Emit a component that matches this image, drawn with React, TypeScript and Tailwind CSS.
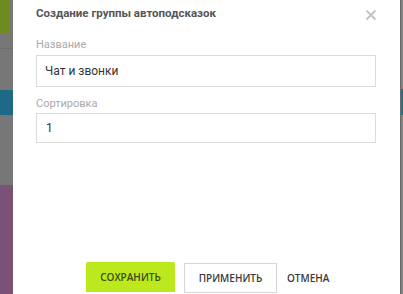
export default function App() {
  return (
    <div className="flex h-[294px] w-[403px] overflow-hidden bg-white">
      {/* backdrop strip, left */}
      <div className="flex w-[13px] shrink-0 flex-col bg-[#777777]">
        <div className="flex h-[34px] pr-[3px]">
          <div className="h-full w-full bg-[#6f8a1f]" />
        </div>
        <div className="h-[14px]" />
        <div className="h-px bg-[#6e6e6e]" />
        <div className="h-[41px]" />
        <div className="h-[25px] bg-[#1e6986]" />
        <div className="h-[70px]" />
        <div className="flex-1 bg-[#7a5276]" />
      </div>

      {/* modal */}
      <div className="flex w-[387px] shrink-0 flex-col bg-white pl-[23px] pr-[24px] font-['Roboto',sans-serif]">
        <div className="flex h-[27px] items-center justify-between pt-px">
          <h2 className="text-[11.5px] font-bold text-[#555555]">Создание группы автоподсказок</h2>
          <svg width="12" height="12" viewBox="0 0 12 12" className="-mr-[1px] mt-[2px]">
            <path d="M1.5 1.5L10.5 10.5M10.5 1.5L1.5 10.5" stroke="#c4c4c4" strokeWidth="2" />
          </svg>
        </div>

        <label className="mt-[11px] text-[11px] leading-[14px] text-[#aaaaaa]">Название</label>
        <div className="mt-[3px] flex h-[32px] items-center border border-[#dcdcdc] px-[8px] text-[12px] text-[#333333]">
          Чат и звонки
        </div>

        <label className="mt-[10px] text-[11px] leading-[14px] text-[#aaaaaa]">Сортировка</label>
        <div className="mt-[2px] flex h-[30px] items-center border border-[#dcdcdc] px-[9px] text-[12px] text-[#333333]">
          1
        </div>

        <div className="mt-[119px] flex items-start pl-[50px] font-['Open_Sans',sans-serif] text-[10px] font-semibold text-[#3a3a3a]">
          <button className="flex h-[30px] w-[89px] items-center justify-center rounded-t-[2px] bg-[#bbe91e] text-[#3d4a12]">
            СОХРАНИТЬ
          </button>
          <button className="ml-[9px] mt-px flex h-[30px] w-[93px] items-center justify-center border border-[#d6d6d6] bg-white">
            ПРИМЕНИТЬ
          </button>
          <button className="ml-[10px] mt-px flex h-[30px] items-center">ОТМЕНА</button>
        </div>
      </div>

      {/* backdrop strip, right */}
      <div className="flex flex-1 flex-col border-l border-[#6a6a6a] bg-[#828282]">
        <div className="h-[89px]" />
        <div className="h-[26px] bg-[#1f7384]" />
        <div className="flex-1" />
      </div>
    </div>
  );
}
